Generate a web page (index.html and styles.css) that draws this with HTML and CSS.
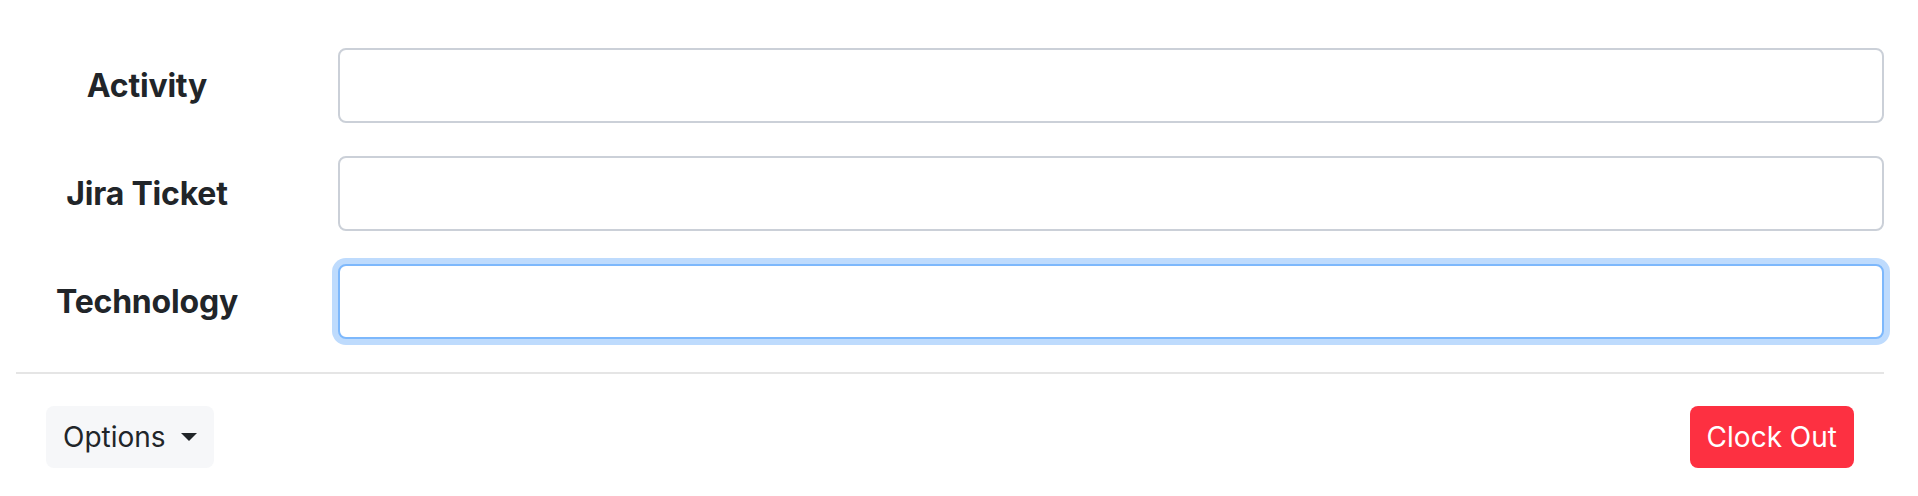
FILE: index.html
```html
<!DOCTYPE html>
<html lang="en">
<head>
<meta charset="UTF-8">
<title>Time Tracker</title>
<link rel="stylesheet" href="styles.css">
</head>
<body>
<div class="container">
  <form class="entry-form">
    <label for="activity">Activity</label>
    <input type="text" id="activity">
    <label for="jiraTicket">Jira Ticket</label>
    <input type="text" id="jiraTicket">
    <label for="technology">Technology</label>
    <input type="text" id="technology" class="focused">
  </form>
  <hr class="divider">
  <div class="footer">
    <button class="btn btn-light" type="button">Options <span class="caret"></span></button>
    <button class="btn btn-danger" type="button">Clock Out</button>
  </div>
</div>
</body>
</html>
```

FILE: styles.css
```css
body {
  font-family: Inter, 'Liberation Sans', Arial, sans-serif;
  color: #212529;
  background-color: #fff;
  margin: 0;
  padding: 0;
}
.container {
  margin: 0 34px 0 16px;
  padding-top: 48px;
}
.entry-form {
  display: grid;
  grid-template-columns: 262px 1fr;
  column-gap: 60px;
  row-gap: 33px;
  align-items: center;
}
.entry-form label {
  text-align: center;
  font-weight: 700;
  font-size: 32px;
  letter-spacing: -0.2px;
}
.entry-form input {
  height: 75px;
  box-sizing: border-box;
  border: 2px solid #cbd0d8;
  border-radius: 8px;
  padding: 0 24px;
  font-size: 30px;
  outline: none;
}
.entry-form input.focused {
  border-color: #7db8fc;
  box-shadow: 0 0 0 6px #bedbfd;
}
.divider {
  border: none;
  border-top: 2px solid #e5e5e5;
  margin: 33px 0 32px;
}
.footer {
  display: flex;
  justify-content: space-between;
  padding: 0 30px;
}
.btn {
  display: inline-flex;
  align-items: center;
  height: 62px;
  padding: 0 17px;
  border: none;
  border-radius: 8px;
  font-family: Inter, 'Liberation Sans', Arial, sans-serif;
  font-size: 28px;
  cursor: pointer;
}
.btn-light {
  background-color: #f6f7f9;
  color: #212529;
}
.btn-danger {
  background-color: #fd3041;
  color: #fff;
}
.caret {
  display: inline-block;
  margin-left: 15px;
  border-top: 8px solid #212529;
  border-left: 8px solid transparent;
  border-right: 8px solid transparent;
}
```
